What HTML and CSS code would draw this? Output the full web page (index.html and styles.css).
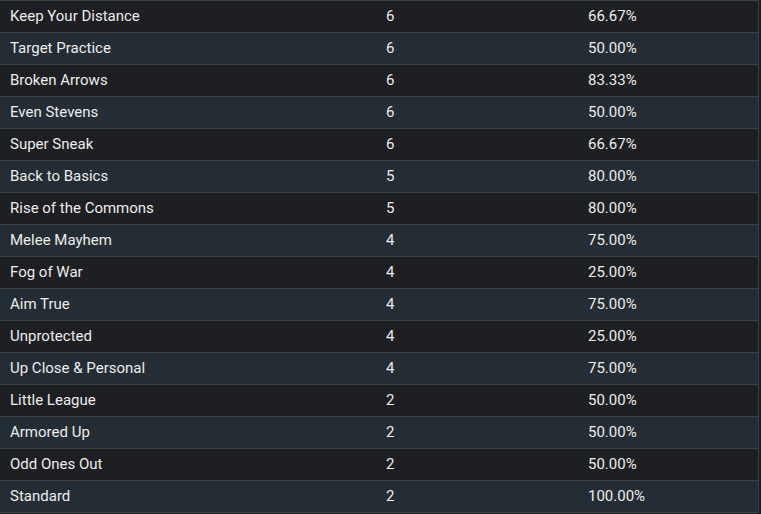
FILE: index.html
```html
<!DOCTYPE html>
<html>
<head>
<meta charset="utf-8">
<link rel="stylesheet" href="styles.css">
</head>
<body>
<div class="wrap">
<table class="stats">
<colgroup><col class="c1"><col class="c2"><col class="c3"></colgroup>
<tbody>
<tr><td>Keep Your Distance</td><td>6</td><td>66.67%</td></tr>
<tr><td>Target Practice</td><td>6</td><td>50.00%</td></tr>
<tr><td>Broken Arrows</td><td>6</td><td>83.33%</td></tr>
<tr><td>Even Stevens</td><td>6</td><td>50.00%</td></tr>
<tr><td>Super Sneak</td><td>6</td><td>66.67%</td></tr>
<tr><td>Back to Basics</td><td>5</td><td>80.00%</td></tr>
<tr><td>Rise of the Commons</td><td>5</td><td>80.00%</td></tr>
<tr><td>Melee Mayhem</td><td>4</td><td>75.00%</td></tr>
<tr><td>Fog of War</td><td>4</td><td>25.00%</td></tr>
<tr><td>Aim True</td><td>4</td><td>75.00%</td></tr>
<tr><td>Unprotected</td><td>4</td><td>25.00%</td></tr>
<tr><td>Up Close &amp; Personal</td><td>4</td><td>75.00%</td></tr>
<tr><td>Little League</td><td>2</td><td>50.00%</td></tr>
<tr><td>Armored Up</td><td>2</td><td>50.00%</td></tr>
<tr><td>Odd Ones Out</td><td>2</td><td>50.00%</td></tr>
<tr><td>Standard</td><td>2</td><td>100.00%</td></tr>
</tbody>
</table>
</div>
</body>
</html>
```
FILE: styles.css
```css
html, body {
  margin: 0;
  padding: 0;
  background: #1b1c1f;
}
.wrap {
  width: 758px;
  border-right: 1px solid #3a4047;
  border-bottom: 1px solid #3a4047;
}
.stats {
  width: 100%;
  border-collapse: collapse;
  table-layout: fixed;
  font-family: Roboto, "Liberation Sans", sans-serif;
  font-size: 15px;
  font-weight: 400;
  color: #ececec;
}
.c1 { width: 376px; }
.c2 { width: 202px; }
.c3 { width: auto; }
.stats td {
  padding: 7px 10px 7px;
  line-height: 17px;
  border-top: 1px solid #394048;
  vertical-align: middle;
}
.stats tr:nth-child(odd) { background: #1e1f22; }
.stats tr:nth-child(even) { background: #242d33; }
```
